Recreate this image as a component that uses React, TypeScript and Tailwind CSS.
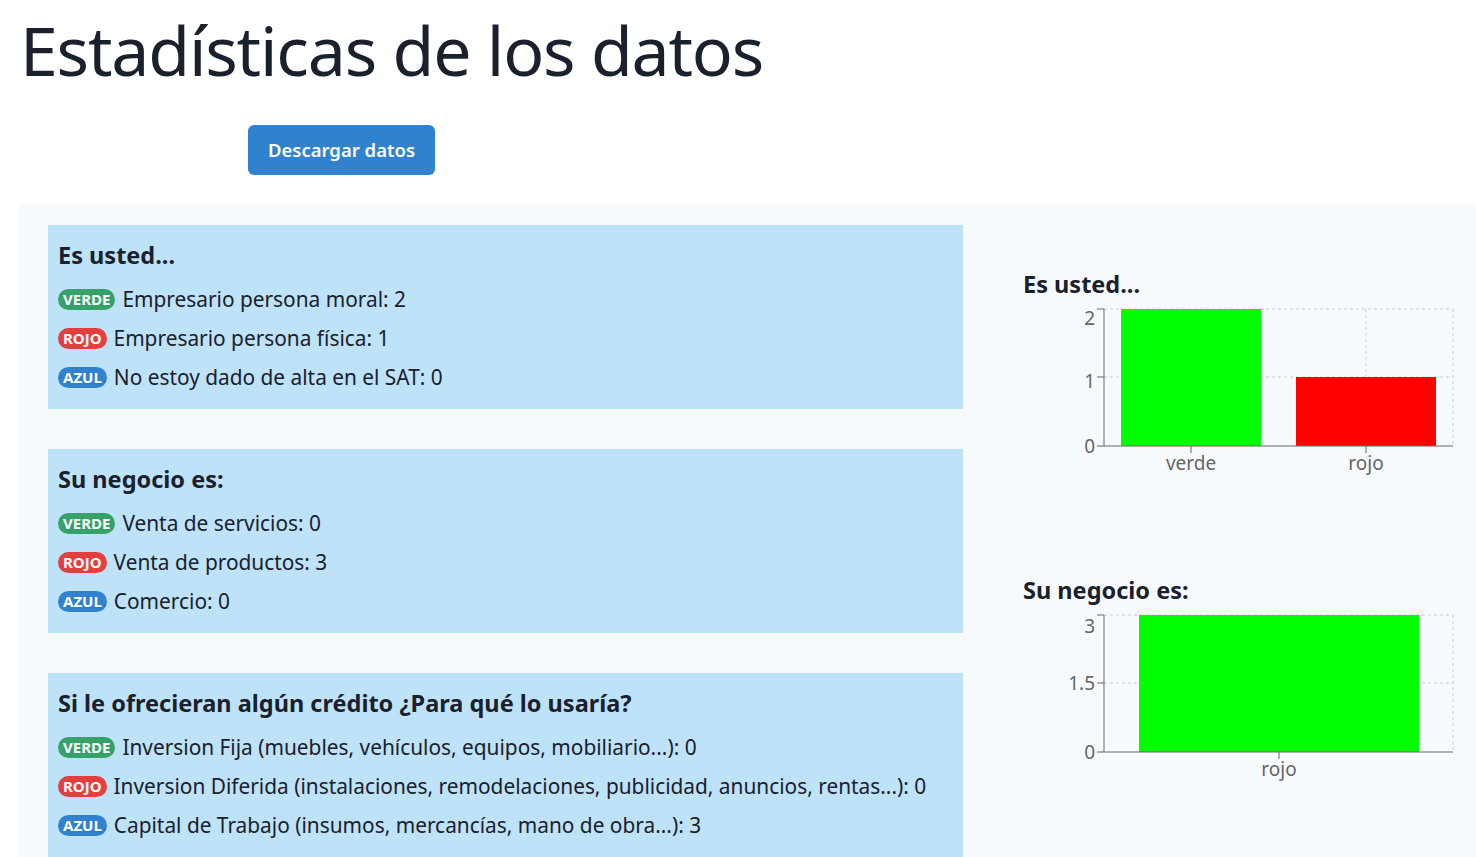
import React from "react";

type Item = { badge: "verde" | "rojo" | "azul"; text: string };

const sections: { title: string; items: Item[] }[] = [
  {
    title: "Es usted...",
    items: [
      { badge: "verde", text: "Empresario persona moral: 2" },
      { badge: "rojo", text: "Empresario persona física: 1" },
      { badge: "azul", text: "No estoy dado de alta en el SAT: 0" },
    ],
  },
  {
    title: "Su negocio es:",
    items: [
      { badge: "verde", text: "Venta de servicios: 0" },
      { badge: "rojo", text: "Venta de productos: 3" },
      { badge: "azul", text: "Comercio: 0" },
    ],
  },
  {
    title: "Si le ofrecieran algún crédito ¿Para qué lo usaría?",
    items: [
      { badge: "verde", text: "Inversion Fija (muebles, vehículos, equipos, mobiliario...): 0" },
      { badge: "rojo", text: "Inversion Diferida (instalaciones, remodelaciones, publicidad, anuncios, rentas...): 0" },
      { badge: "azul", text: "Capital de Trabajo (insumos, mercancías, mano de obra...): 3" },
    ],
  },
];

const badgeClass = {
  verde: "bg-[#38a169]",
  rojo: "bg-[#e53e3e]",
  azul: "bg-[#3182ce]",
};

const Badge = ({ kind }: { kind: Item["badge"] }) => (
  <span
    className={`${badgeClass[kind]} inline-flex h-[21px] items-center rounded-full px-[5px] text-[15px] font-bold uppercase leading-none text-white`}
  >
    {kind}
  </span>
);

type Bar = { x: number; w: number; top: number; fill: string };

const Chart = ({
  ticks,
  bars,
  labels,
  vgrid,
}: {
  ticks: { y: number; label: string; ly: number }[];
  bars: Bar[];
  labels: { x: number; text: string }[];
  vgrid: number[];
}) => {
  const left = 101;
  const right = 450;
  const bottom = 146;
  return (
    <svg width="460" height="180" viewBox="0 0 460 180" className="block">
      {/* grid */}
      {ticks.slice(0, -1).map((t) => (
        <line key={t.label} x1={left} x2={right} y1={t.y} y2={t.y} stroke="#ccc" strokeDasharray="3 3" />
      ))}
      {vgrid.map((x) => (
        <line key={x} x1={x} x2={x} y1={9} y2={bottom} stroke="#ccc" strokeDasharray="3 3" />
      ))}
      {bars.map((b) => (
        <rect key={b.x} x={b.x} y={b.top} width={b.w} height={bottom - b.top} fill={b.fill} />
      ))}
      {/* axes */}
      <line x1={left} x2={left} y1={9} y2={bottom} stroke="#666" />
      <line x1={left} x2={right} y1={bottom} y2={bottom} stroke="#666" />
      {ticks.map((t) => (
        <g key={t.label}>
          <line x1={left - 7} x2={left} y1={t.y} y2={t.y} stroke="#666" />
          <text x={left - 9} y={t.ly} textAnchor="end" fill="#666" fontSize="19">
            {t.label}
          </text>
        </g>
      ))}
      {labels.map((l) => (
        <g key={l.text}>
          <line x1={l.x} x2={l.x} y1={bottom} y2={bottom + 7} stroke="#666" />
          <text x={l.x} y={bottom + 24} textAnchor="middle" fill="#666" fontSize="19">
            {l.text}
          </text>
        </g>
      ))}
    </svg>
  );
};

export default function App() {
  return (
    <div className="min-h-screen bg-white font-['Noto_Sans',sans-serif] text-[#1a202c]">
      <h1 className="pl-5 pt-[5px] text-[68px] font-normal leading-[90px] tracking-[-1.2px]">
        Estadísticas de los datos
      </h1>
      <div className="pl-[248px] pt-[30px]">
        <button className="h-[50px] w-[187px] rounded-md bg-[#3182ce] text-[18.5px] font-semibold text-white">
          Descargar datos
        </button>
      </div>

      <div className="ml-[18px] mt-[30px] flex bg-[#f7fafc] pb-10 pt-5">
        <div className="ml-[30px] flex w-[915px] flex-col gap-10">
          {sections.map((s) => (
            <div key={s.title} className="bg-[#bee3f8] px-[10px] pb-[16px] pt-[12px]">
              <h2 className="text-[23.5px] font-bold leading-[36px]">{s.title}</h2>
              <div className="mt-[10px] flex flex-col gap-[7px]">
                {s.items.map((it) => (
                  <div key={it.text} className="flex items-center gap-[7px] text-[20.85px] leading-[32px]">
                    <Badge kind={it.badge} />
                    <span>{it.text}</span>
                  </div>
                ))}
              </div>
            </div>
          ))}
        </div>

        <div className="ml-[40px] flex flex-1 flex-col pt-[43px]">
          <h3 className="pl-5 text-[23.5px] font-bold leading-[32px]">Es usted...</h3>
          <Chart
            ticks={[
              { y: 9, label: "2", ly: 25 },
              { y: 77, label: "1", ly: 88 },
              { y: 146, label: "0", ly: 153 },
            ]}
            bars={[
              { x: 118, w: 140, top: 9, fill: "#00ff00" },
              { x: 293, w: 140, top: 77, fill: "#ff0000" },
            ]}
            labels={[
              { x: 188, text: "verde" },
              { x: 363, text: "rojo" },
            ]}
            vgrid={[363, 450]}
          />
          <h3 className="mt-[94px] pl-5 text-[23.5px] font-bold leading-[32px]">Su negocio es:</h3>
          <Chart
            ticks={[
              { y: 9, label: "3", ly: 27 },
              { y: 77, label: "1.5", ly: 84 },
              { y: 146, label: "0", ly: 153 },
            ]}
            bars={[{ x: 136, w: 280, top: 9, fill: "#00ff00" }]}
            labels={[{ x: 276, text: "rojo" }]}
            vgrid={[450]}
          />
        </div>
      </div>
    </div>
  );
}
